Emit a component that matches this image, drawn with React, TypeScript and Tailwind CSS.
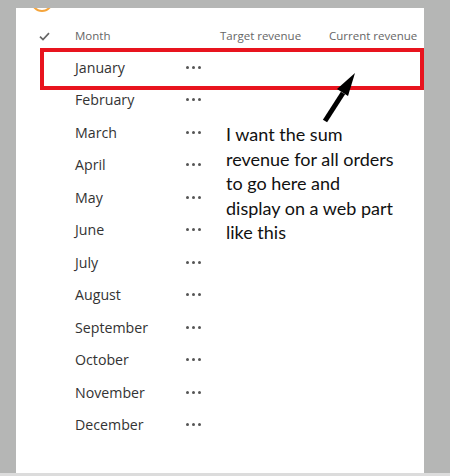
import React from 'react';

const MONTHS = [
  'January',
  'February',
  'March',
  'April',
  'May',
  'June',
  'July',
  'August',
  'September',
  'October',
  'November',
  'December',
];

const MoreDots: React.FC = () => (
  <div className="flex items-center gap-[3px]">
    <span className="h-[3px] w-[3px] rounded-full bg-[#555]" />
    <span className="h-[3px] w-[3px] rounded-full bg-[#555]" />
    <span className="h-[3px] w-[3px] rounded-full bg-[#555]" />
  </div>
);

const App: React.FC = () => {
  return (
    <div className="flex h-[476px] w-[450px] flex-col bg-[#b5b6b5] font-['Open_Sans','Noto_Sans',sans-serif]">
      <div className="relative ml-[16px] mt-[8px] h-[465px] w-[408px] overflow-hidden bg-white pt-[16px]">
        {/* clipped status ring at the top */}
        <div className="absolute left-[15px] top-[-18px] h-[22px] w-[22px] rounded-full border-2 border-[#f5a53c]" />

        <div className="grid h-[24px] grid-cols-[59px_145px_109px_1fr] items-center text-[11.5px] text-[#666]">
          <div className="pl-[23px]">
            <svg width="11" height="9" viewBox="0 0 11 9" fill="none">
              <path d="M1 4.6 4 7.6 10 1.2" stroke="#666" strokeWidth="1.7" />
            </svg>
          </div>
          <span>Month</span>
          <span>Target revenue</span>
          <span>Current revenue</span>
        </div>

        <ul className="mt-[3px]">
          {MONTHS.map((month) => (
            <li key={month} className="grid h-[32.5px] grid-cols-[59px_111px_auto] items-center">
              <span />
              <span className="text-[14.2px] text-[#333]">{month}</span>
              <MoreDots />
            </li>
          ))}
        </ul>

        {/* annotation overlay */}
        <div className="pointer-events-none absolute left-[24px] top-[40px] h-[42px] w-[384px] border-4 border-[#e8141e]" />
        <svg className="pointer-events-none absolute left-0 top-0" width="408" height="465" viewBox="0 0 408 465">
          <path d="M309 113 327 85" stroke="#000" strokeWidth="5" />
          <path d="M339 65 321 81 332 88Z" fill="#000" />
        </svg>
        <p className="absolute left-[210px] top-[114px] text-[18px] leading-[24.6px] text-[#111] font-['Lato','Open_Sans',sans-serif]">
          I want the sum
          <br />
          revenue for all orders
          <br />
          to go here and
          <br />
          display on a web part
          <br />
          like this
        </p>
      </div>
      <div className="mt-auto h-[3px] bg-[#dcdcdc]" />
    </div>
  );
};

export default App;
